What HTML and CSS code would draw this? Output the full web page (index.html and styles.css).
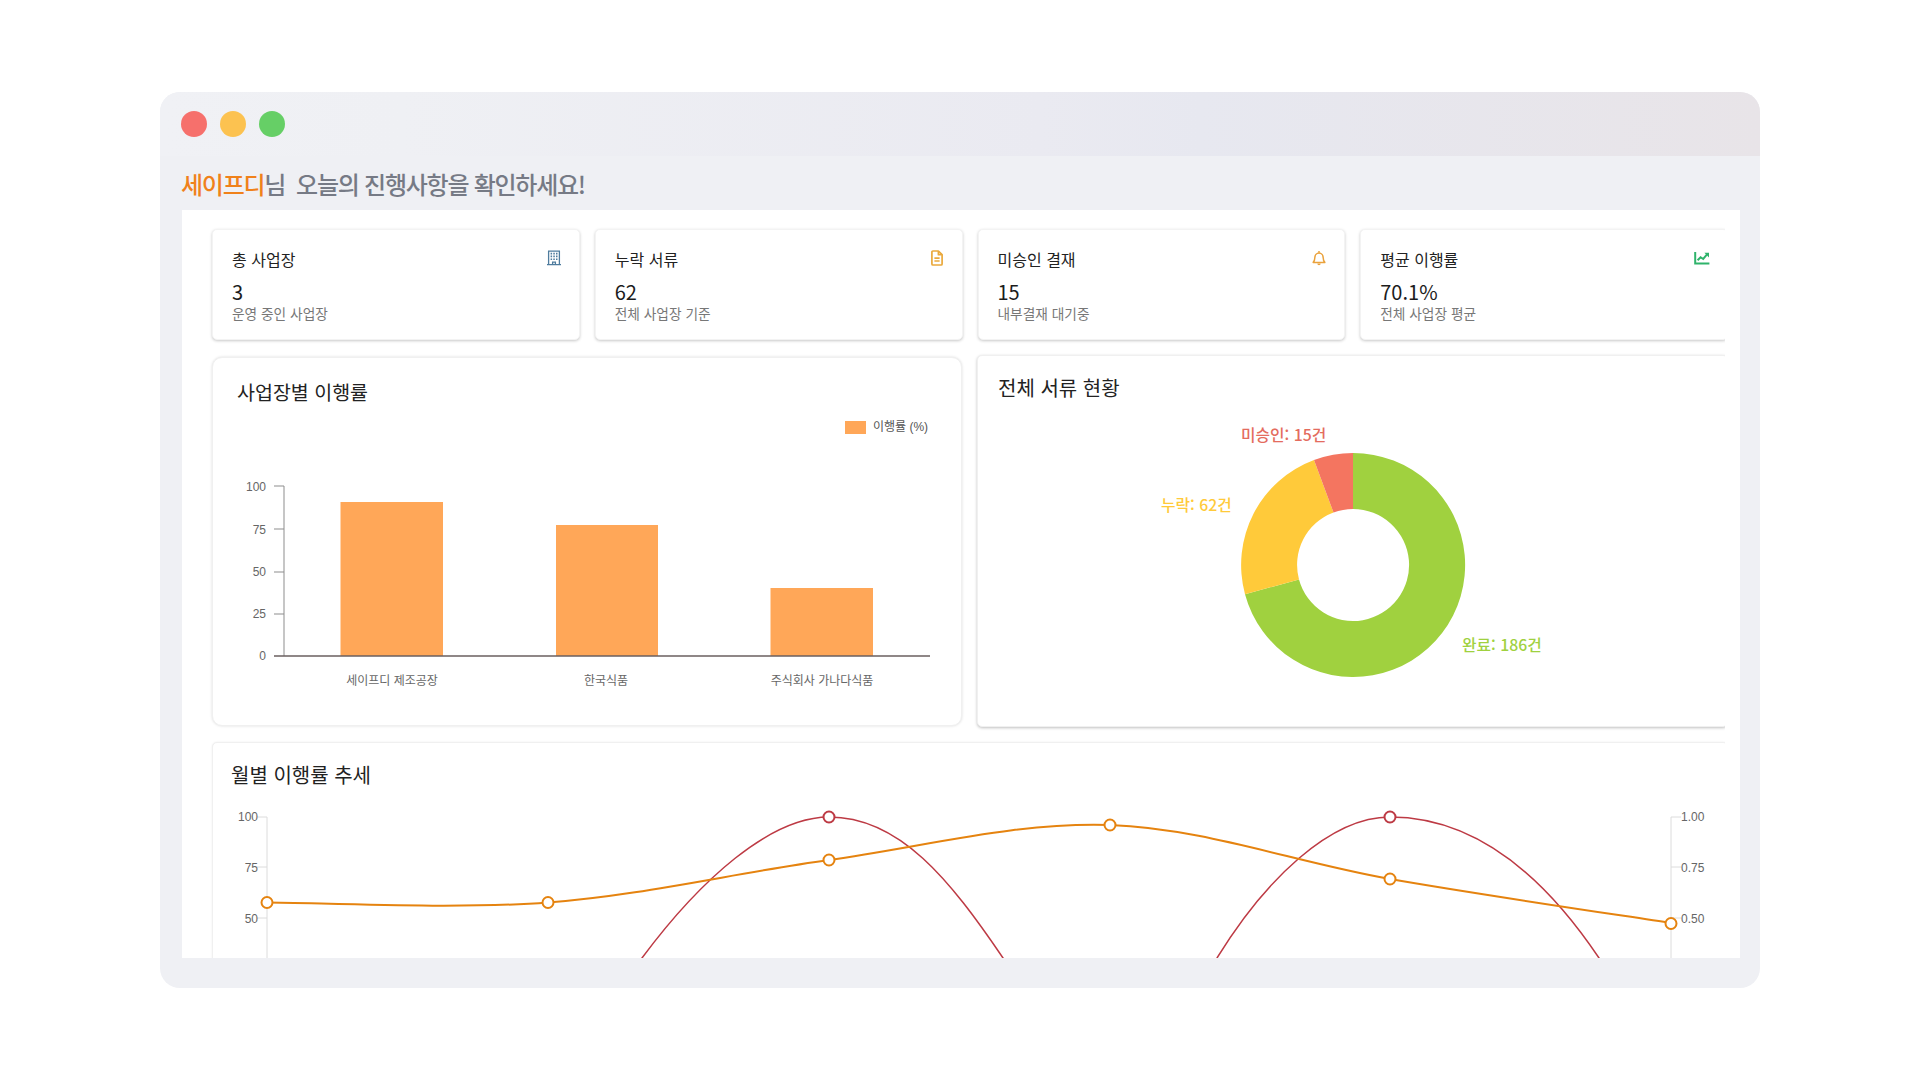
FILE: index.html
```html
<!DOCTYPE html>
<html lang="ko">
<head>
<meta charset="utf-8">
<title>대시보드</title>
<link rel="stylesheet" href="styles.css">
</head>
<body>
<div class="window">
  <div class="titlebar">
    <span class="dot dot-red"></span>
    <span class="dot dot-yellow"></span>
    <span class="dot dot-green"></span>
  </div>
  <h1 class="heading"><span class="brand">세이프디</span>님&nbsp; 오늘의 진행사항을 확인하세요!</h1>
  <main class="content">
    <div class="scroll">
      <div class="inner">
        <section class="stats">
          <article class="stat">
            <div class="stat-head"><span>총 사업장</span>
              <svg class="icon" viewBox="0 0 16 16" fill="none" stroke="#4f7c9e" stroke-width="1.3"><path d="M2.600 14.600V1.200h10.800v13.400M1 14.600h14"/><path d="M6.600 14.600v-2.400h2.800v2.400"/><path stroke-width="1.600" d="M4.600 3.600h1.500M7.300 3.600h1.500M10 3.600h1.500M4.600 6.400h1.500M7.300 6.400h1.500M10 6.400h1.500M4.600 9.200h1.500M7.300 9.200h1.500M10 9.200h1.500"/></svg>
            </div>
            <div class="stat-value">3</div>
            <div class="stat-sub">운영 중인 사업장</div>
          </article>
          <article class="stat">
            <div class="stat-head"><span>누락 서류</span>
              <svg class="icon" viewBox="0 0 16 16" fill="none" stroke="#eaa93c" stroke-width="1.700" stroke-linejoin="round"><path d="M9.400 1H3.900a1 1 0 0 0-1 1v12a1 1 0 0 0 1 1h8.200a1 1 0 0 0 1-1V4.700z"/><path d="M9.400 1v3.700h3.700"/><path d="M5.400 8.200h5.200M5.400 11h5.200"/></svg>
            </div>
            <div class="stat-value">62</div>
            <div class="stat-sub">전체 사업장 기준</div>
          </article>
          <article class="stat">
            <div class="stat-head"><span>미승인 결재</span>
              <svg class="icon" viewBox="0 0 16 16" fill="none" stroke="#eaa23c" stroke-width="1.500" stroke-linejoin="round"><path d="M2.200 12.400c1.200-1.200 1.600-2.400 1.600-4.600 0-2.600 1.800-4.800 4.200-4.800s4.200 2.200 4.200 4.800c0 2.200.4 3.400 1.600 4.600z"/><path d="M8 1v1.800"/><path fill="#eaa23c" stroke="none" d="M6.300 13.600h3.400a1.700 1.700 0 0 1-3.400 0z"/></svg>
            </div>
            <div class="stat-value">15</div>
            <div class="stat-sub">내부결재 대기중</div>
          </article>
          <article class="stat">
            <div class="stat-head"><span>평균 이행률</span>
              <svg class="icon" viewBox="0 0 16 16" fill="none" stroke="#2fb36b" stroke-width="2"><path d="M1.200 2v11.600H15.400"/><path d="M3.600 10.200l3-3 2.600 1.800 3.800-4.600"/><path fill="#2fb36b" stroke="none" d="M10.400 2.800h4.600v4.600z"/></svg>
            </div>
            <div class="stat-value">70.1%</div>
            <div class="stat-sub">전체 사업장 평균</div>
          </article>
        </section>

        <section class="charts">
          <article class="panel panel-bars">
            <h2 class="panel-title">사업장별 이행률</h2>
            <svg class="chart chart-bars" viewBox="213 405 748 320">
              <rect class="swatch" x="845" y="421" width="21" height="13"/>
              <text class="legend" x="873" y="431">이행률 (%)</text>
              <path class="axis-dark" d="M274 486h10v170M274 529h10M274 572h10M274 614h10"/>
              <rect class="bar" x="340.500" y="502" width="102.500" height="154"/>
              <rect class="bar" x="556" y="525" width="102" height="131"/>
              <rect class="bar" x="770.500" y="588" width="102.500" height="68"/>
              <path class="baseline" d="M274 656H930"/>
              <text class="tick end" x="266" y="491">100</text>
              <text class="tick end" x="266" y="534">75</text>
              <text class="tick end" x="266" y="576">50</text>
              <text class="tick end" x="266" y="618">25</text>
              <text class="tick end" x="266" y="660">0</text>
              <text class="cat" x="392" y="685">세이프디 제조공장</text>
              <text class="cat" x="606" y="685">한국식품</text>
              <text class="cat" x="822" y="685">주식회사 가나다식품</text>
            </svg>
          </article>
          <article class="panel panel-donut">
            <h2 class="panel-title">전체 서류 현황</h2>
            <svg class="chart chart-donut" viewBox="978 400 749 326">
              <path class="slice-green" d="M1353 453A112 112 0 1 1 1245 594.200L1299 579.500A56 56 0 1 0 1353 509Z"/>
              <path class="slice-yellow" d="M1245 594.200A112 112 0 0 1 1314 460L1333.500 512.500A56 56 0 0 0 1299 579.500Z"/>
              <path class="slice-red" d="M1314 460A112 112 0 0 1 1353 453V509A56 56 0 0 0 1333.500 512.500Z"/>
              <text class="lbl lbl-red" x="1241" y="441">미승인: 15건</text>
              <text class="lbl lbl-yellow" x="1161" y="511">누락: 62건</text>
              <text class="lbl lbl-green" x="1462" y="651">완료: 186건</text>
            </svg>
          </article>
        </section>

        <article class="panel panel-trend">
          <h2 class="panel-title">월별 이행률 추세</h2>
          <svg class="chart chart-trend" viewBox="213 787 1514 200">
            <path class="axis-light" d="M257 817h10V987M257 867h10M257 918h10M1681 817h-10V987M1681 867h-10M1681 918h-10"/>
            <text class="tick end" x="258" y="821">100</text>
            <text class="tick end" x="258" y="872">75</text>
            <text class="tick end" x="258" y="923">50</text>
            <text class="tick" x="1681" y="821">1.00</text>
            <text class="tick" x="1681" y="872">0.75</text>
            <text class="tick" x="1681" y="923">0.50</text>
            <path class="line-red" d="M630 976L642 958C700 880 770 817 829 817C900 817 950 880 1003 958L1015 976M1205 976L1217 958C1265 880 1330 817 1390 817C1470 817 1540 870 1599 958L1611 976"/>
            <path class="line-orange" d="M267 902.500C314 902.500 454 909.600 548 902.500C642 895.400 735 873 829 860C923 847 1016.500 821.800 1110 825C1203.500 828.200 1296.500 862.700 1390 879C1483.500 895.300 1624 915.700 1671 923"/>
            <circle class="pt-red" cx="829" cy="817" r="5.500"/>
            <circle class="pt-red" cx="1390" cy="817" r="5.500"/>
            <circle class="pt-orange" cx="267" cy="902.500" r="5.500"/>
            <circle class="pt-orange" cx="548" cy="902.500" r="5.500"/>
            <circle class="pt-orange" cx="829" cy="860" r="5.500"/>
            <circle class="pt-orange" cx="1110" cy="825" r="5.500"/>
            <circle class="pt-orange" cx="1390" cy="879" r="5.500"/>
            <circle class="pt-orange" cx="1671" cy="923.500" r="5.500"/>
          </svg>
        </article>
      </div>
    </div>
  </main>
</div>
</body>
</html>
```

FILE: styles.css
```css
* { box-sizing: border-box; }

html, body { margin: 0; height: 100%; }

body {
  background: #ffffff;
  padding: 92px 160px 0;
  font-family: "Noto Sans CJK KR", "Noto Sans", sans-serif;
  overflow: hidden;
}

.window {
  display: flex;
  flex-direction: column;
  width: 1600px;
  height: 896px;
  border-radius: 20px;
  background: #eff0f4;
  overflow: hidden;
}

.titlebar {
  display: flex;
  align-items: center;
  gap: 13px;
  height: 64px;
  flex: none;
  padding-left: 21px;
  background: linear-gradient(90deg, #f0f1f5 0%, #eff0f4 15%, #eaeaf1 55%, #e7e8f0 65%, #e8e4e8 100%);
}

.dot { width: 26px; height: 26px; border-radius: 50%; }
.dot-red { background: #f6706c; }
.dot-yellow { background: #fcc250; }
.dot-green { background: #66cf66; }

.heading {
  display: flex;
  align-items: center;
  flex: none;
  height: 54px;
  margin: 0;
  padding-left: 21px;
  font-size: 24px;
  font-weight: 500;
  letter-spacing: -1.250px;
  white-space: pre;
  color: #767a85;
}

.brand { color: #f0811a; }

.content {
  flex: 1;
  min-height: 0;
  margin: 0 20px 30px 22px;
  padding: 0 15px 0 14px;
  background: #ffffff;
  overflow: hidden;
}

.scroll {
  height: 100%;
  padding: 19px 0 0 16px;
  overflow: hidden;
}

.inner {
  display: flex;
  flex-direction: column;
  width: 1516px;
}

.stats {
  display: grid;
  grid-template-columns: repeat(4, 1fr);
  gap: 15px;
}

.stat {
  height: 111px;
  padding: 17px 17px 0 19px;
  border-radius: 5px;
  background: #fff;
  border: 1px solid #f3f3f3;
  box-shadow: 0 1px 3px rgba(0, 0, 0, 0.22);
}

.stat-head {
  display: flex;
  justify-content: space-between;
  align-items: center;
  height: 23px;
  font-size: 16px;
  color: #222;
}

.icon { width: 16px; height: 16px; margin-top: -2px; }

.stat-value {
  margin-top: 8px;
  font-size: 20px;
  line-height: 27px;
  color: #1c1c1c;
}

.stat-sub {
  margin-top: 0;
  font-size: 13.700px;
  line-height: 16px;
  color: #777;
}

.charts {
  display: grid;
  grid-template-columns: 750px 751px;
  gap: 15px;
  align-items: start;
  margin-top: 15px;
}

.panel {
  display: flex;
  flex-direction: column;
  background: #fff;
  border: 1px solid #f0f0f0;
}

.panel-title {
  margin: 0;
  font-size: 20px;
  font-weight: 400;
  line-height: 26px;
  color: #222;
}

.panel-bars {
  height: 369px;
  margin-top: 2px;
  padding-top: 21px;
  border-radius: 10px;
  box-shadow: 0 0 3px rgba(0, 0, 0, 0.14);
}

.panel-bars .panel-title { padding-left: 24px; font-size: 19.500px; }

.panel-donut {
  height: 372px;
  padding-top: 19px;
  border-radius: 5px;
  box-shadow: 0 1px 3px rgba(0, 0, 0, 0.25);
}

.panel-donut .panel-title { padding-left: 20px; }

.panel-donut .chart-donut { margin-top: -1px; }

.panel-trend {
  margin-top: 15px;
  padding-top: 19px;
  border-radius: 5px 5px 0 0;
  box-shadow: 0 0 2px rgba(0, 0, 0, 0.08);
}

.panel-trend .panel-title { padding-left: 18px; }

.panel-trend .chart-trend { margin-top: -1px; }

.chart { display: block; flex: none; }
.chart-bars { width: 748px; height: 320px; }
.chart-donut { width: 749px; height: 326px; }
.chart-trend { width: 1514px; height: 200px; }

.chart text { font-family: "Liberation Sans", "Noto Sans CJK KR", sans-serif; }

.swatch, .bar { fill: #ffa758; }
.legend { font-size: 12px; fill: #555; }
.tick { font-size: 12px; fill: #666; }
.tick.end { text-anchor: end; }
.cat { font-size: 12px; fill: #666; text-anchor: middle; }

.axis-dark { fill: none; stroke: #8d8d8d; stroke-width: 1; }
.baseline { fill: none; stroke: #6a5f5f; stroke-width: 1.400px; }
.axis-light { fill: none; stroke: #dcdcdc; stroke-width: 1; }

.slice-green { fill: #a0d13f; }
.slice-yellow { fill: #ffca3a; }
.slice-red { fill: #f47560; }

.chart .lbl { font-family: "Noto Sans CJK KR", sans-serif; font-size: 15.800px; font-weight: 500; }
.lbl-red { fill: #e46c5e; }
.lbl-yellow { fill: #ffca3a; }
.lbl-green { fill: #a0d13f; }

.line-red { fill: none; stroke: #bd3a44; stroke-width: 1.500px; }
.line-orange { fill: none; stroke: #e5830f; stroke-width: 2px; }
.pt-red { fill: #fff; stroke: #bd3a44; stroke-width: 2px; }
.pt-orange { fill: #fff; stroke: #e5830f; stroke-width: 2px; }
```
